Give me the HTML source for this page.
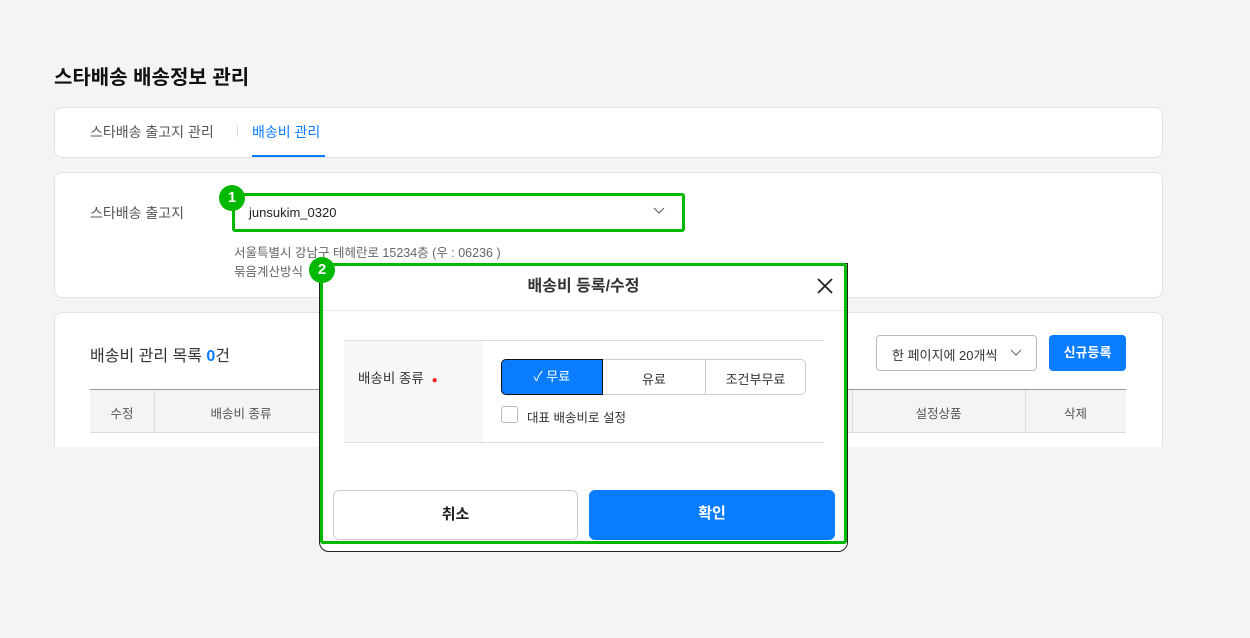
<!DOCTYPE html><html><head><meta charset="utf-8"><style>
*{box-sizing:border-box;margin:0;padding:0}
body{width:1250px;height:638px;background:#f4f4f4;font-family:"Liberation Sans","Noto Sans CJK KR",sans-serif;position:relative;overflow:hidden;color:#333}
.a{position:absolute}
.card{position:absolute;background:#fff;border:1px solid #e2e2e2;border-radius:8px}
.badge{position:absolute;width:26px;height:26px;border-radius:50%;background:#00b800;color:#fff;font-weight:bold;font-size:15px;text-align:center;line-height:26px}
</style></head><body>
<div class="a" style="left:54px;top:61px;font-size:20px;font-weight:bold;color:#111">스타배송 배송정보 관리</div>
<div class="card" style="left:54px;top:107px;width:1109px;height:51px"></div>
<div class="a" style="left:90px;top:122px;font-size:14px;color:#555">스타배송 출고지 관리</div>
<div class="a" style="left:237px;top:126px;width:1px;height:11px;background:#ddd"></div>
<div class="a" style="left:252px;top:122px;font-size:14px;color:#0a7cff">배송비 관리</div>
<div class="a" style="left:252px;top:155px;width:73px;height:2px;background:#0a7cff"></div>

<div class="card" style="left:54px;top:172px;width:1109px;height:126px"></div>
<div class="a" style="left:90px;top:203px;font-size:14px;color:#555">스타배송 출고지</div>
<div class="a" style="left:232px;top:193px;width:453px;height:39px;border:3px solid #00b800;border-radius:3px;background:#fff"></div>
<div class="a" style="left:249px;top:205px;font-size:13px;color:#222">junsukim_0320</div>
<svg class="a" style="left:653px;top:207px" width="12" height="8"><path d="M1 1l5 5 5-5" fill="none" stroke="#666" stroke-width="1.2"/></svg>
<div class="badge" style="left:219px;top:185px">1</div>
<div class="a" style="left:234px;top:242px;font-size:12.5px;color:#666">서울특별시 강남구 테헤란로 15234층 (우 : 06236 )</div>
<div class="a" style="left:234px;top:261px;font-size:12.5px;color:#666">묶음계산방식</div>

<div class="card" style="left:54px;top:312px;width:1109px;height:150px;border-bottom:none;border-radius:8px 8px 0 0"></div>
<div class="a" style="left:0;top:447px;width:1250px;height:191px;background:#f4f4f4"></div>
<div class="a" style="left:90px;top:342px;font-size:16px;color:#333">배송비 관리 목록 <b style="color:#0a7cff">0</b>건</div>
<div class="a" style="left:876px;top:335px;width:161px;height:36px;border:1px solid #bbb;border-radius:4px;background:#fff"></div>
<div class="a" style="left:892px;top:345px;font-size:13px;color:#333">한 페이지에 20개씩</div>
<svg class="a" style="left:1010px;top:349px" width="12" height="8"><path d="M1 1l5 5 5-5" fill="none" stroke="#777" stroke-width="1.2"/></svg>
<div class="a" style="left:1049px;top:335px;width:77px;height:36px;background:#0a7cff;border-radius:4px;color:#fff;font-size:13px;font-weight:bold;text-align:center;line-height:36px">신규등록</div>
<div class="a" style="left:90px;top:389px;width:1036px;height:44px;background:#f4f4f4;border-top:1px solid #999;border-bottom:1px solid #ddd"></div>
<div class="a" style="left:154px;top:390px;width:1px;height:42px;background:#ddd"></div>
<div class="a" style="left:852px;top:390px;width:1px;height:42px;background:#ddd"></div>
<div class="a" style="left:1025px;top:390px;width:1px;height:42px;background:#ddd"></div>
<div class="a" style="left:90px;top:403px;width:64px;text-align:center;font-size:12.5px;color:#555">수정</div>
<div class="a" style="left:154px;top:403px;width:174px;text-align:center;font-size:12.5px;color:#555">배송비 종류</div>
<div class="a" style="left:852px;top:403px;width:173px;text-align:center;font-size:12.5px;color:#555">설정상품</div>
<div class="a" style="left:1025px;top:403px;width:101px;text-align:center;font-size:12.5px;color:#555">삭제</div>

<div class="a" style="left:319px;top:263px;width:529px;height:289px;background:#fff;border:1px solid #222;border-radius:0 0 10px 10px"></div>
<div class="a" style="left:320px;top:263px;width:527px;height:281px;border:3px solid #00b800;border-radius:3px"></div>
<div class="a" style="left:323px;top:272px;width:521px;text-align:center;font-size:16px;font-weight:bold;color:#333">배송비 등록/수정</div>
<svg class="a" style="left:816px;top:277px" width="18" height="18"><path d="M2 2l14 14M16 2L2 16" stroke="#222" stroke-width="1.8"/></svg>
<div class="a" style="left:323px;top:310px;width:521px;height:1px;background:#e8e8e8"></div>
<div class="a" style="left:344px;top:340px;width:480px;height:103px;border-top:1px solid #ddd;border-bottom:1px solid #ddd"></div>
<div class="a" style="left:344px;top:341px;width:139px;height:101px;background:#f8f8f8"></div>
<div class="a" style="left:358px;top:367px;font-size:13.5px;color:#333">배송비 종류 <span style="color:#e22;font-size:10px;margin-left:4px">●</span></div>
<div class="a" style="left:501px;top:359px;width:305px;height:36px;border:1px solid #ccc;border-radius:5px;background:#fff"></div>
<div class="a" style="left:501px;top:359px;width:102px;height:36px;background:#0a7cff;border:1px solid #111;border-radius:5px 0 0 5px;color:#fff;font-size:13px;text-align:center;line-height:34px">✓ 무료</div>
<div class="a" style="left:705px;top:360px;width:1px;height:34px;background:#ccc"></div>
<div class="a" style="left:603px;top:369px;width:102px;text-align:center;font-size:13px;color:#333">유료</div>
<div class="a" style="left:705px;top:369px;width:101px;text-align:center;font-size:13px;color:#333">조건부무료</div>
<div class="a" style="left:501px;top:406px;width:17px;height:17px;border:1px solid #bbb;border-radius:3px"></div>
<div class="a" style="left:527px;top:407px;font-size:12.5px;color:#333">대표 배송비로 설정</div>
<div class="a" style="left:333px;top:490px;width:245px;height:50px;border:1px solid #ccc;border-radius:6px;background:#fff;text-align:center;line-height:48px;font-size:15px;font-weight:bold;color:#222">취소</div>
<div class="a" style="left:589px;top:490px;width:246px;height:50px;border-radius:6px;background:#0a7cff;text-align:center;line-height:48px;font-size:15px;font-weight:bold;color:#fff">확인</div>
<div class="badge" style="left:309px;top:257px">2</div>
</body></html>
